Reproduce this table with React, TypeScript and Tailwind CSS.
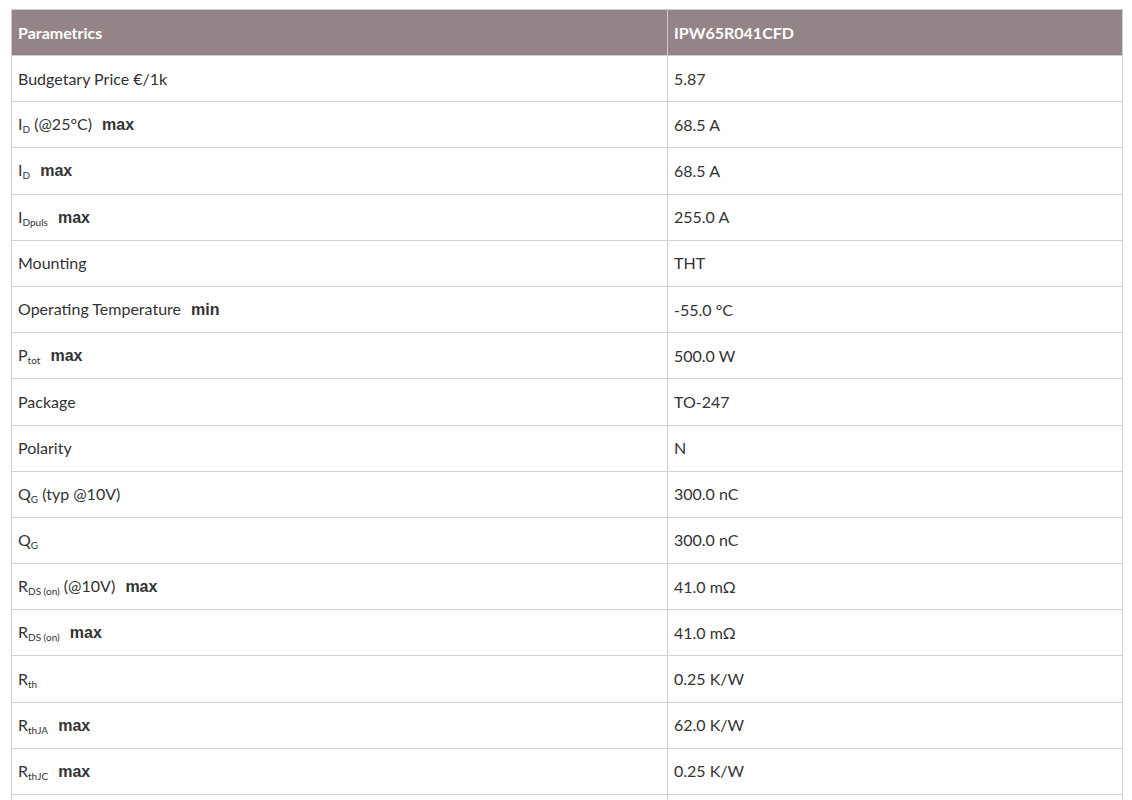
import React from "react"

type Row = { label: React.ReactNode; value: string }

const Sub = ({ children }: { children: React.ReactNode }) => (
  <sub className="text-[10px] relative top-[3px] align-baseline">{children}</sub>
)

const Max = ({ children = "max" }: { children?: string }) => (
  <b className="ml-[6px] font-bold font-['Liberation_Sans',Arial,sans-serif] text-[16px]">{children}</b>
)

const rows: Row[] = [
  { label: <>Budgetary Price €/1k</>, value: "5.87" },
  { label: <>I<Sub>D</Sub> (@25°C) <Max /></>, value: "68.5 A" },
  { label: <>I<Sub>D</Sub> <Max /></>, value: "68.5 A" },
  { label: <>I<Sub>Dpuls</Sub> <Max /></>, value: "255.0 A" },
  { label: <>Mounting</>, value: "THT" },
  { label: <>Operating Temperature <Max>min</Max></>, value: "-55.0 °C" },
  { label: <>P<Sub>tot</Sub> <Max /></>, value: "500.0 W" },
  { label: <>Package</>, value: "TO-247" },
  { label: <>Polarity</>, value: "N" },
  { label: <>Q<Sub>G</Sub> (typ @10V)</>, value: "300.0 nC" },
  { label: <>Q<Sub>G</Sub></>, value: "300.0 nC" },
  { label: <>R<Sub>DS (on)</Sub> (@10V) <Max /></>, value: "41.0 mΩ" },
  { label: <>R<Sub>DS (on)</Sub> <Max /></>, value: "41.0 mΩ" },
  { label: <>R<Sub>th</Sub></>, value: "0.25 K/W" },
  { label: <>R<Sub>thJA</Sub> <Max /></>, value: "62.0 K/W" },
  { label: <>R<Sub>thJC</Sub> <Max /></>, value: "0.25 K/W" },
]

export default function App() {
  return (
    <div className="bg-white h-[800px] overflow-hidden pt-[9px] pl-[11px] pr-[9px] font-['Lato','Open_Sans',sans-serif] text-[16px] text-[#333333]">
      <table className="w-[1112px] border-collapse table-fixed">
        <colgroup>
          <col className="w-[656px]" />
          <col />
        </colgroup>
        <thead>
          <tr className="h-[46px] bg-[#938587] text-white">
            <th className="border border-[#cfcfcf] px-[6px] text-left font-bold">Parametrics</th>
            <th className="border border-[#cfcfcf] px-[6px] text-left font-bold">IPW65R041CFD</th>
          </tr>
        </thead>
        <tbody>
          {rows.map((r, i) => (
            <tr key={i} className="h-[46.2px]">
              <td className="border border-[#d0d0d0] px-[6px] whitespace-nowrap">{r.label}</td>
              <td className="border border-[#d0d0d0] px-[6px]">{r.value}</td>
            </tr>
          ))}
          <tr className="h-[46.2px]">
            <td className="border border-[#d0d0d0] px-[6px]"></td>
            <td className="border border-[#d0d0d0] px-[6px]"></td>
          </tr>
        </tbody>
      </table>
    </div>
  )
}
